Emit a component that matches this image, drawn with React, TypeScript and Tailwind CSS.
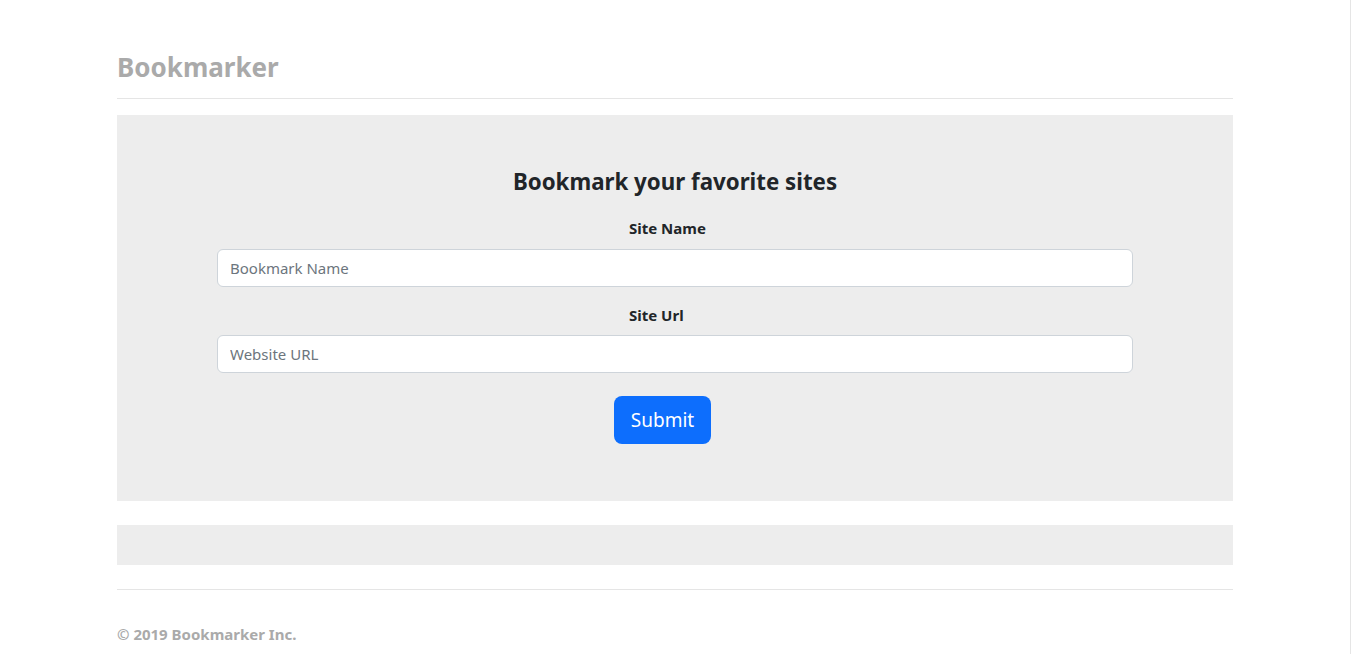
export default function App() {
  const font = { fontFamily: '"Noto Sans", "Open Sans", sans-serif' };
  return (
    <div className="min-h-[654px] bg-white border-r border-[#e5e5e5]" style={font}>
      <div className="mx-auto w-[1116px]">
        <div className="pt-[50px] pb-[14px] border-b border-[#e5e5e5]">
          <h3 className="text-[26px] leading-[34px] font-bold text-[#aaaaaa] m-0">Bookmarker</h3>
        </div>
        <div className="mt-[16px] bg-[#ededed] h-[386px] flex flex-col items-center pt-[52px]">
          <h2 className="text-[22.3px] leading-[29px] font-bold text-[#212529] mb-[20px]">Bookmark your favorite sites</h2>
          <form className="w-[916px] flex flex-col">
            <div className="pl-[412px]">
              <label className="text-[15px] leading-[24px] font-bold text-[#212529]">Site Name</label>
            </div>
            <input
              type="text"
              placeholder="Bookmark Name"
              className="mt-[9px] w-full h-[38px] px-[12px] bg-white border border-[#ced4da] rounded-[6px] text-[15px] text-[#212529] placeholder:text-[#6c757d] outline-none"
            />
            <div className="mt-[16px] pl-[412px]">
              <label className="text-[15px] leading-[24px] font-bold text-[#212529]">Site Url</label>
            </div>
            <input
              type="text"
              placeholder="Website URL"
              className="mt-[8px] w-full h-[38px] px-[12px] bg-white border border-[#ced4da] rounded-[6px] text-[15px] text-[#212529] placeholder:text-[#6c757d] outline-none"
            />
            <div className="mt-[23px] pl-[397px]">
              <button
                type="button"
                className="w-[97px] h-[48px] bg-[#0d6efd] text-white text-[19px] rounded-[8px]"
              >
                Submit
              </button>
            </div>
          </form>
        </div>
        <div className="mt-[24px] h-[40px] bg-[#ededed]"></div>
        <div className="mt-[24px] border-t border-[#e5e5e5] pt-[33px]">
          <p className="text-[15px] leading-[22px] font-bold text-[#aaaaaa]">© 2019 Bookmarker Inc.</p>
        </div>
      </div>
    </div>
  );
}
